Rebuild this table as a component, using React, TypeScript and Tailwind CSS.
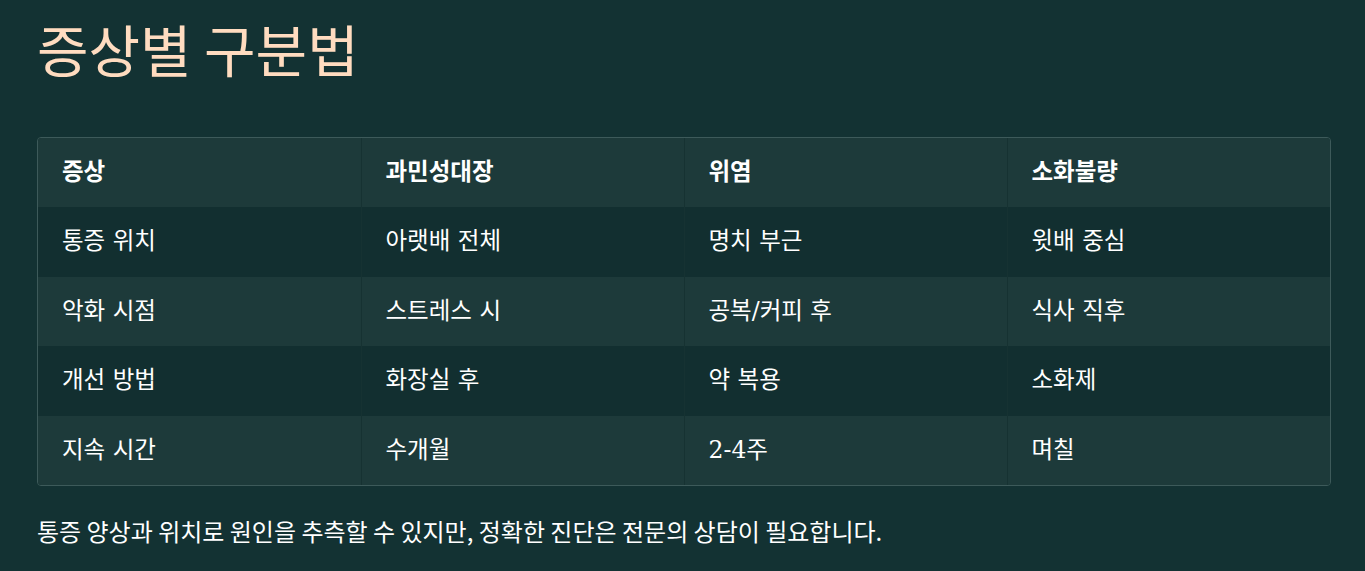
const rows = [
  ["통증 위치", "아랫배 전체", "명치 부근", "윗배 중심"],
  ["악화 시점", "스트레스 시", "공복/커피 후", "식사 직후"],
  ["개선 방법", "화장실 후", "약 복용", "소화제"],
  ["지속 시간", "수개월", "2-4주", "며칠"],
];

const heads = ["증상", "과민성대장", "위염", "소화불량"];

export default function App() {
  return (
    <div className="min-h-[571px] w-full bg-[#133233] pl-[37px] pr-[34px] pt-[14px] font-['DejaVu_Serif','Noto_Sans_CJK_KR',serif] text-white">
      <h1 className="font-['Noto_Sans_CJK_KR',sans-serif] text-[56px] leading-[67px] text-[#ffdcc0]">
        증상별 구분법
      </h1>

      <div className="mt-[56px] overflow-hidden rounded-[4px] border border-[#3d5a5a]">
        <table className="w-full table-fixed border-collapse text-[23.5px]">
          <thead>
            <tr className="bg-[#1d3a3a]">
              {heads.map((h) => (
                <th
                  key={h}
                  className="h-[69px] border-r border-[#163232] px-6 text-left font-bold last:border-r-0"
                >
                  {h}
                </th>
              ))}
            </tr>
          </thead>
          <tbody>
            {rows.map((r, i) => (
              <tr key={i} className={i % 2 === 0 ? "bg-[#122f30]" : "bg-[#1d3a3a]"}>
                {r.map((c, j) => (
                  <td
                    key={j}
                    className="h-[69.5px] border-r border-[#163232] px-6 last:border-r-0"
                  >
                    {c}
                  </td>
                ))}
              </tr>
            ))}
          </tbody>
        </table>
      </div>

      <p className="mt-[27px] font-['Noto_Sans_CJK_KR',sans-serif] text-[24px] leading-[36px]">
        통증 양상과 위치로 원인을 추측할 수 있지만, 정확한 진단은 전문의 상담이 필요합니다.
      </p>
    </div>
  );
}
